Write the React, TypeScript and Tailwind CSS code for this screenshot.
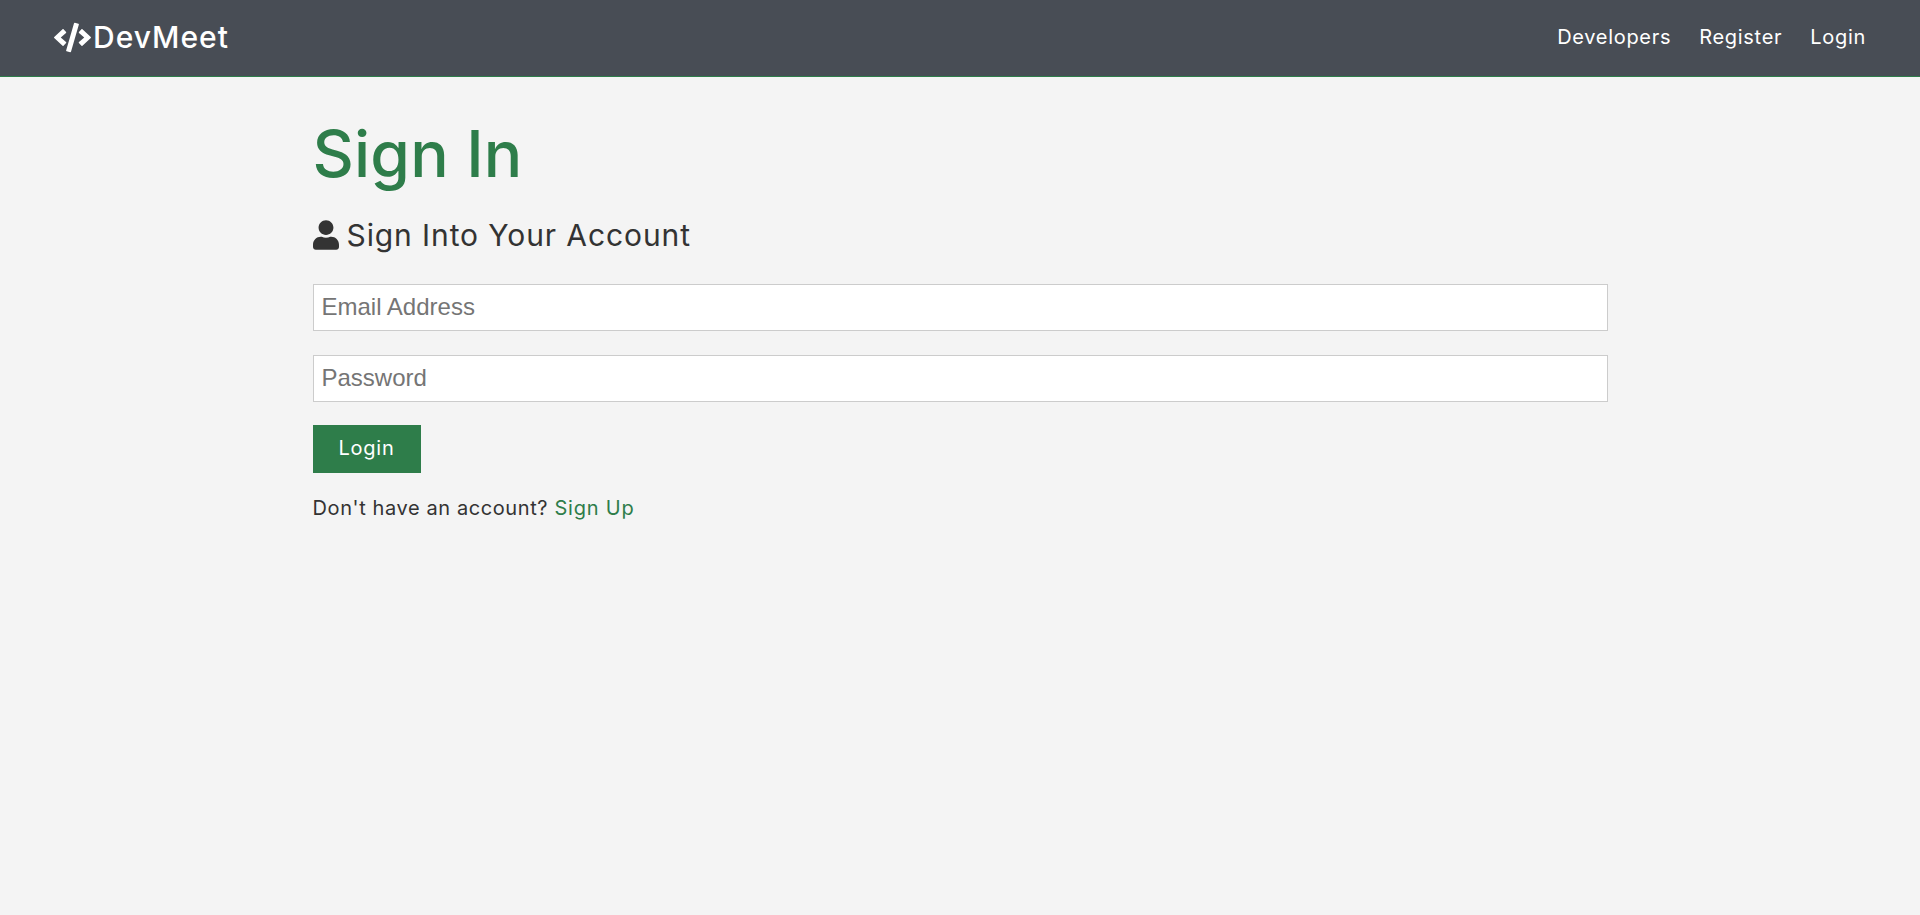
import { FaCode, FaUser } from "react-icons/fa";

export default function App() {
  return (
    <div className="min-h-[915px] bg-[#f4f4f4] font-['Inter','Open_Sans',sans-serif] text-[#333]">
      {/* Navbar */}
      <nav className="flex h-[77px] items-center justify-between border-b border-[#2e7d4a] bg-[#484d55] px-[54px] pb-[2px] text-white">
        <a href="#" className="flex items-center text-[30px] font-medium tracking-[1px]">
          <FaCode className="mr-[2px] h-[37px] w-[37px]" />
          DevMeet
        </a>
        <ul className="flex items-center gap-[28px] text-[20px] tracking-[0.7px]">
          <li>
            <a href="#">Developers</a>
          </li>
          <li>
            <a href="#">Register</a>
          </li>
          <li>
            <a href="#">Login</a>
          </li>
        </ul>
      </nav>

      {/* Login form */}
      <section className="mx-auto w-[1295px] pt-[39px]">
        <h1 className="text-[64px] font-medium leading-[1.2] tracking-[0.2px] text-[#2e7d4a]">Sign In</h1>
        <p className="mt-[18px] flex items-center text-[30px] leading-[1.6] tracking-[0.9px] text-[#333]">
          <FaUser className="mr-[8px] h-[30px] w-[26px] text-[#333]" />
          Sign Into Your Account
        </p>
        <form className="mt-[25px] flex flex-col items-start">
          <input
            type="email"
            placeholder="Email Address"
            className="h-[47px] w-full border border-[#ccc] bg-white px-[8px] font-['Liberation_Sans',Arial,sans-serif] text-[24px] outline-none placeholder:text-[#757575]"
          />
          <input
            type="password"
            placeholder="Password"
            className="mt-[24px] h-[47px] w-full border border-[#ccc] bg-white px-[8px] font-['Liberation_Sans',Arial,sans-serif] text-[24px] outline-none placeholder:text-[#757575]"
          />
          <button
            type="button"
            className="mt-[23px] h-[48px] w-[108px] bg-[#2e7d4a] pb-[1px] text-[20px] tracking-[0.8px] text-white"
          >
            Login
          </button>
        </form>
        <p className="mt-[19px] text-[20px] leading-[1.6] tracking-[0.6px] text-[#333]">
          Don't have an account? <a href="#" className="tracking-[0.8px] text-[#2e7d4a]">Sign Up</a>
        </p>
      </section>
    </div>
  );
}
